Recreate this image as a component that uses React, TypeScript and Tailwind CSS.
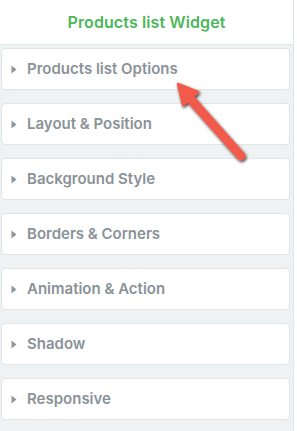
const SECTIONS = [
  'Products list Options',
  'Layout & Position',
  'Background Style',
  'Borders & Corners',
  'Animation & Action',
  'Shadow',
  'Responsive',
]

function Caret() {
  return (
    <svg width="6" height="9" viewBox="0 0 6 9" className="shrink-0">
      <path d="M0.5 0.5 L5.5 4.5 L0.5 8.5 Z" fill="#8e969d" />
    </svg>
  )
}

function Arrow() {
  return (
    <svg
      width="297"
      height="431"
      viewBox="0 0 297 431"
      className="absolute inset-0 pointer-events-none"
    >
      <defs>
        <filter id="sh" x="-20%" y="-20%" width="140%" height="140%">
          <feDropShadow dx="1" dy="1.5" stdDeviation="1.6" floodColor="#000" floodOpacity="0.8" />
        </filter>
      </defs>
      <g filter="url(#sh)">
        <line x1="186" y1="94" x2="241" y2="156" stroke="#f25a4b" strokeWidth="9" strokeLinecap="round" />
        <path d="M178 84 L198 92 L183 105 Z" fill="#f25a4b" stroke="#f25a4b" strokeWidth="2.5" strokeLinejoin="round" />
      </g>
    </svg>
  )
}

export default function App() {
  return (
    <div className="relative w-[297px] h-[431px] bg-white overflow-hidden" style={{ fontFamily: 'Inter, "Open Sans", sans-serif' }}>
      <div className="w-[294px] h-full bg-[#eef2f3] border-r border-[#dfe4e6] flex flex-col">
        <div className="h-[45px] bg-white border-b border-[#e1e6e8] flex items-center justify-center">
          <span className="text-[16px] font-semibold text-[#4cb75a] tracking-[0.1px]">Products list Widget</span>
        </div>
        <div className="flex flex-col gap-[13px] pt-[3px] pl-[1px] pr-[3px]">
          {SECTIONS.map((s) => (
            <div
              key={s}
              className="h-[42px] bg-white border border-[#dfe5e8] rounded-[4px] flex items-center gap-[10px] pl-[9px]"
            >
              <Caret />
              <span className="text-[15px] font-semibold text-[#8a9298]">{s}</span>
            </div>
          ))}
        </div>
      </div>
      <Arrow />
    </div>
  )
}
